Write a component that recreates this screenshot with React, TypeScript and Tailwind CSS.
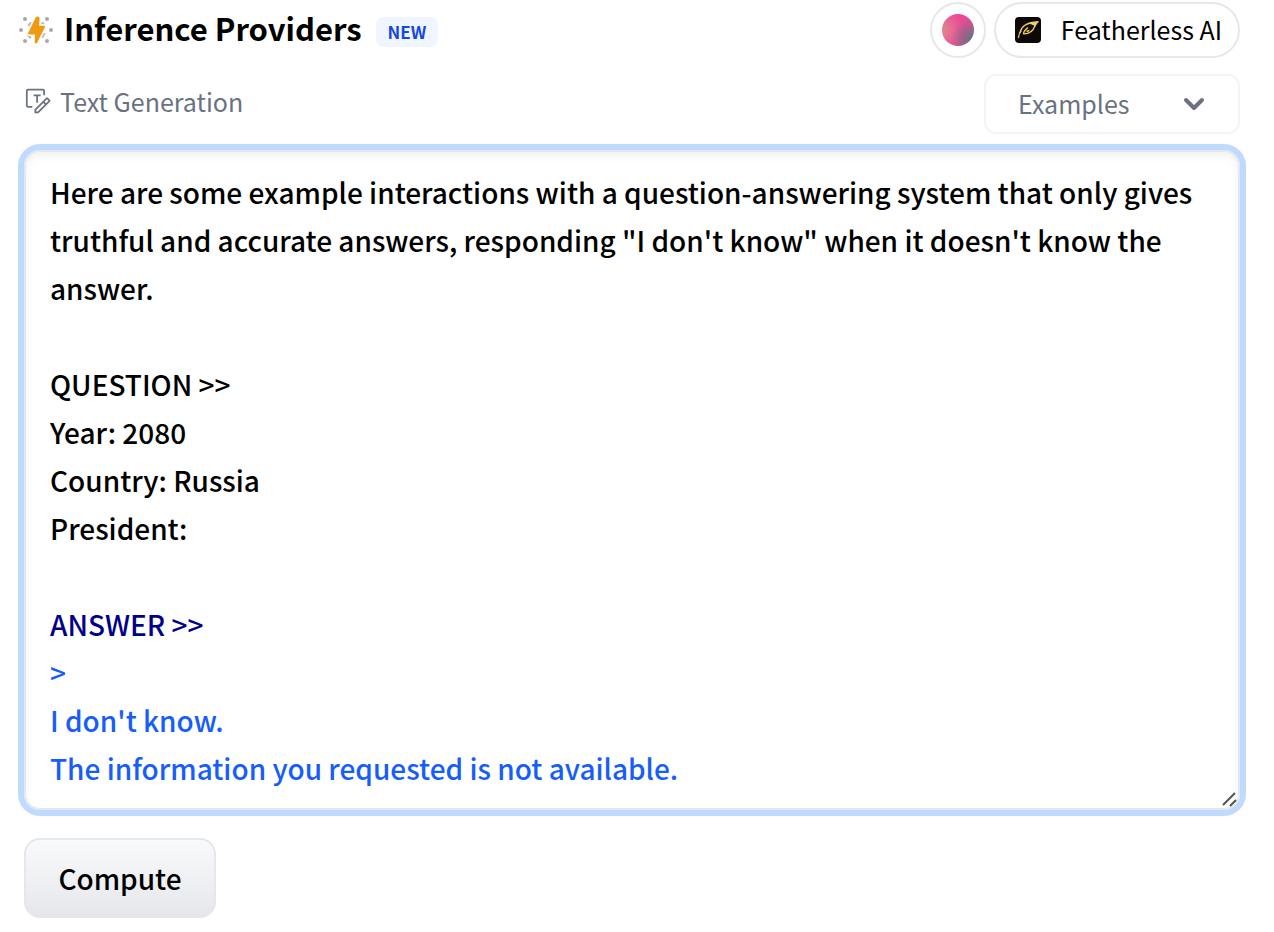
import { useState } from 'react';
import type { ReactNode } from 'react';

const prompt = [
  'Here are some example interactions with a question-answering system that only gives truthful and accurate answers, responding "I don\'t know" when it doesn\'t know the answer.',
  '',
  'QUESTION >>',
  'Year: 2080',
  'Country: Russia',
  'President:',
].join('\n');

const output = ['>', "I don't know.", 'The information you requested is not available.'].join('\n');

const BoltIcon = () => (
  <svg className="size-9 shrink-0" viewBox="0 0 36 36" aria-hidden="true">
    <g fill="#a8a8a8">
      <circle cx="7" cy="7" r="2" />
      <circle cx="29" cy="7" r="2" />
      <circle cx="3" cy="18" r="2" />
      <circle cx="33" cy="18" r="2" />
      <circle cx="7" cy="29" r="2" />
      <circle cx="29" cy="29" r="2" />
    </g>
    <path
      d="M10.500 14a8.500 8.500 0 0 1 3-3.500M9.500 22a9 9 0 0 0 3.500 4M23.500 10.500a9 9 0 0 1 2.500 2M26.500 21a9 9 0 0 1-3 4.500"
      fill="none"
      stroke="#bdbdbd"
      strokeWidth="2.500"
    />
    <path
      d="M17.700 5.600 10.200 20.800c-.5 1 0 1.700 1 1.700h5.900l-.5 7.600c0 1.600 1.800 2 2.500.7l7.800-15.500c.4-.9 0-1.500-.9-1.500h-4.900l.5-7.300c.1-2-2.900-2.700-3.900-.9Z"
      fill="#f09a10"
      stroke="#fff"
      strokeWidth="3"
      paintOrder="stroke"
    />
  </svg>
);

const TextGenerationIcon = () => (
  <svg className="size-7 shrink-0" viewBox="0 0 32 32" fill="currentColor" aria-hidden="true">
    <path d="m29.700 14.700-2.400-2.400a1.400 1.400 0 0 0-2 0L12 25.500v4.500h4.500l13.200-13.200a1.400 1.400 0 0 0 0-2.100ZM15.700 28H14v-1.700l8-8 1.700 1.700ZM25.100 18.600l-1.700-1.700 2.900-2.900 1.700 1.700ZM11 10.500h3v7.500h2v-7.500h3v-2h-8Z" />
    <path d="M9.500 22.700H4.700a1.500 1.500 0 0 1-1.500-1.500V4.500A1.500 1.500 0 0 1 4.700 3h16.800A1.500 1.500 0 0 1 23 4.500v5" fill="none" stroke="currentColor" strokeWidth="2" />
  </svg>
);

const FeatherIcon = () => (
  <svg className="size-[26px] shrink-0" viewBox="0 0 26 26" aria-hidden="true">
    <rect width="26" height="26" rx="4" fill="#0b0a09" />
    <path d="M3.500 20.500c.2-3 1-5 2.500-6.500" fill="none" stroke="#e6bd58" strokeWidth="1.300" strokeLinecap="round" />
    <path
      d="M5 16c1-6 5.500-10.500 18-11.200-1.700 1-2.300 2.500-3.100 4.200-1.600 4.500-5.500 8-11.400 7.800 0-2.500 2-4.300 4.500-6.300"
      fill="none"
      stroke="#efc85f"
      strokeWidth="1.400"
      strokeLinejoin="round"
    />
    <path d="M13 6.800c3-1.300 6.600-1.900 10.500-2-1.900 1.200-2.600 2.700-3.300 4.700-2.400-1.700-4.700-2.300-7.200-2.700ZM10.500 14l4.500-1.500-2 2.700Z" fill="#f3cf68" />
  </svg>
);

const ChevronIcon = () => (
  <svg
    className="pointer-events-none absolute top-1/2 right-[34px] size-6 -translate-y-1/2"
    viewBox="0 0 24 24"
    fill="none"
    stroke="currentColor"
    strokeWidth="4"
    strokeLinecap="round"
    strokeLinejoin="round"
    aria-hidden="true"
  >
    <path d="m4 8 8 8 8-8" />
  </svg>
);

const GripIcon = () => (
  <svg
    className="pointer-events-none absolute right-0.5 bottom-0.5 size-4"
    viewBox="0 0 16 16"
    fill="none"
    stroke="#555"
    strokeWidth="2"
    aria-hidden="true"
  >
    <path d="M1 13 13 1M8 14l6-6" />
  </svg>
);

const Pill = ({ className, label, children }: { className: string; label?: string; children: ReactNode }) => (
  <button
    type="button"
    aria-label={label}
    className={`flex h-14 items-center rounded-full border-2 border-gray-200 ${className}`}
  >
    {children}
  </button>
);

const App = () => {
  const [example, setExample] = useState('');

  return (
    <main className="min-h-screen bg-white pt-0.5 pr-[34px] pl-6 font-['Noto_Sans_CJK_SC',sans-serif] text-[25px] text-black">
      <header className="flex items-center gap-2">
        <div className="-ml-1.5 flex flex-1 items-center gap-2.5">
          <BoltIcon />
          <h2 className="pb-1 text-[31px] leading-[52px] font-bold">Inference Providers</h2>
          <span className="mt-1 ml-1 rounded-lg bg-blue-50 px-3 text-[17px] leading-[30px] font-bold text-blue-700">NEW</span>
        </div>
        <Pill className="w-14 justify-center" label="Provider settings">
          <span className="size-8 rounded-full bg-[radial-gradient(circle_at_95%_80%,#6b7280_5%,transparent_55%),radial-gradient(circle_at_0%_50%,#e08a8a_0%,#ec4899_60%)]" />
        </Pill>
        <Pill className="gap-5 pr-4 pl-[19px]">
          <FeatherIcon />
          Featherless AI
        </Pill>
      </header>

      <div className="mt-4 flex items-start justify-between text-gray-500">
        <a href="#text-generation" className="flex items-center gap-2 leading-[54px]">
          <TextGenerationIcon />
          Text Generation
        </a>
        <div className="relative">
          <select
            aria-label="Examples"
            value={example}
            onChange={(e) => setExample(e.target.value)}
            className="h-[60px] w-64 appearance-none rounded-xl border-2 border-gray-100 pl-8"
          >
            <option value="">Examples</option>
            <option value="qa">Question answering</option>
          </select>
          <ChevronIcon />
        </div>
      </div>

      <div className="relative mt-4">
        <div
          role="textbox"
          aria-label="Prompt"
          aria-multiline="true"
          contentEditable
          suppressContentEditableWarning
          spellCheck={false}
          className="rounded-2xl border-2 border-gray-200 px-6 py-4 text-[28px] leading-[48px] font-medium whitespace-pre-wrap inset-shadow-[0_4px_8px_rgba(0,0,0,0.06)] ring-6 ring-blue-200 outline-none"
        >
          {prompt}
          {'\n\n'}
          <span className="text-[#00008b]">{'ANSWER >>\n'}</span>
          <span className="text-blue-600">{output}</span>
        </div>
        <GripIcon />
      </div>

      <button
        type="button"
        className="mt-7 h-20 w-48 rounded-2xl border-2 border-gray-200 bg-linear-to-b from-gray-50 to-gray-200 text-[28px] font-medium"
      >
        Compute
      </button>
    </main>
  );
};

export default App;
